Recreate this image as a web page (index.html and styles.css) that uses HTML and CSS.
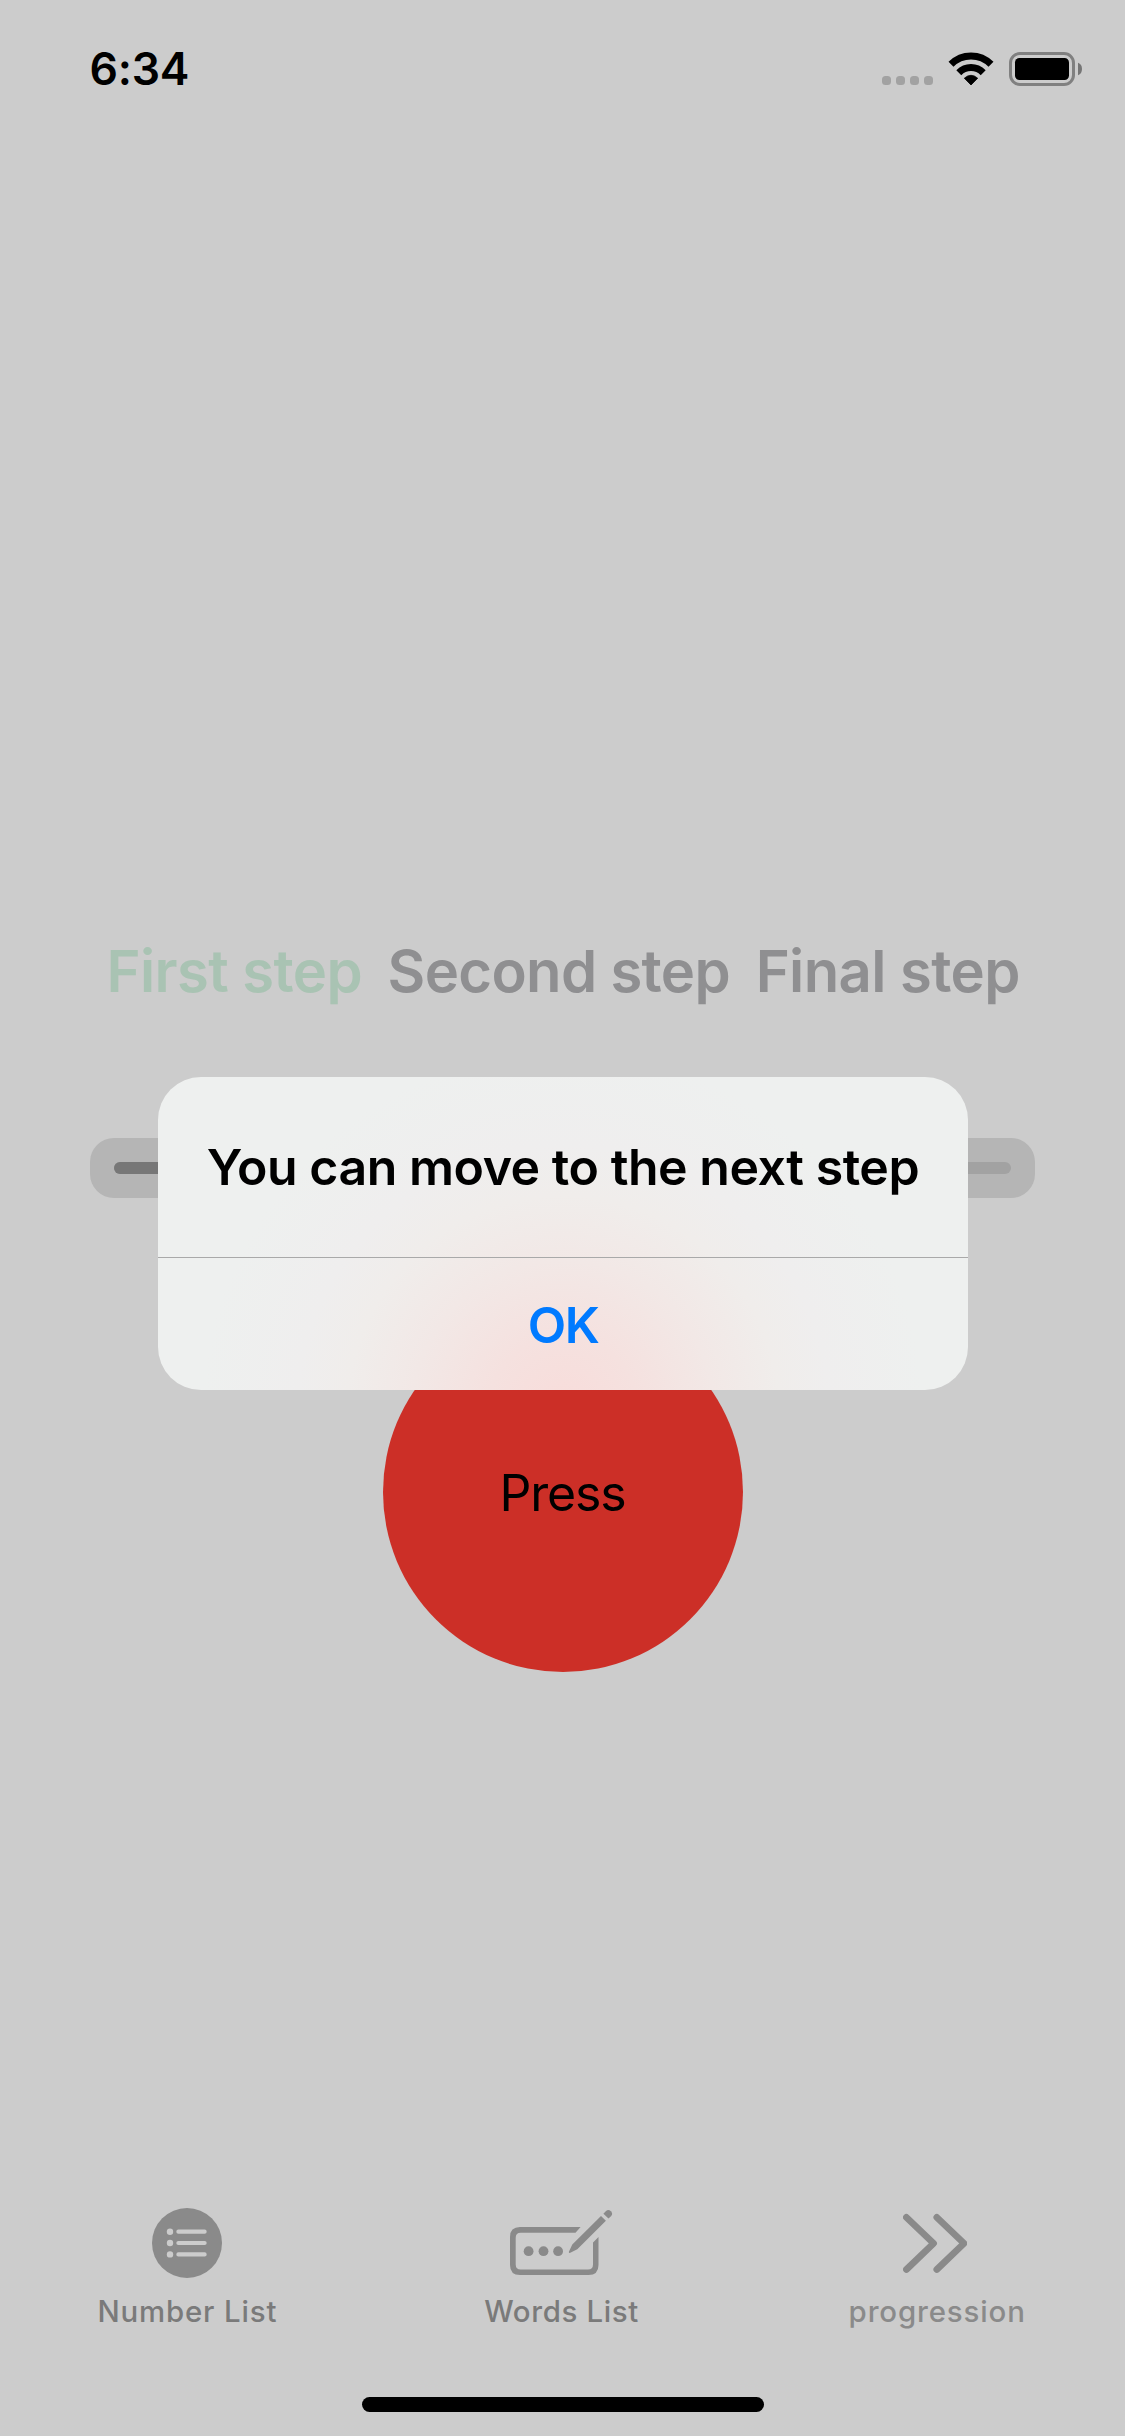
FILE: index.html
```html
<!DOCTYPE html>
<html lang="en">
<head>
<meta charset="utf-8">
<title>Progression</title>
<link rel="stylesheet" href="styles.css">
</head>
<body>
<div class="screen">
  <header class="status-bar">
    <span class="time">6:34</span>
    <div class="indicators">
      <div class="signal"><i></i><i></i><i></i><i></i></div>
      <svg class="wifi" width="46" height="34" viewBox="0 0 46 34">
        <g fill="none" stroke="#000" stroke-width="7">
          <path d="M3 12.2A28.2 28.2 0 0 1 43 12.2"/>
          <path d="M10.8 20.7A17.2 17.2 0 0 1 35.2 20.7"/>
        </g>
        <path d="M16.3 26.2Q23 20.4 29.7 26.2L23 33Z" stroke="#000" stroke-width=".8" stroke-linejoin="round"/>
      </svg>
      <svg class="battery" width="74" height="34" viewBox="0 0 74 34">
        <rect x="1.5" y="1.5" width="63" height="31" rx="9.5" fill="none" stroke="#808080" stroke-width="3"/>
        <rect x="6" y="6" width="54" height="22" rx="4.5"/>
        <path d="M69 10.7Q73 12.2 73 17T69 23.3Z" fill="#757575"/>
      </svg>
    </div>
  </header>

  <main class="content">
    <div class="steps">
      <span class="step step-active">First step</span>
      <span class="step step-second">Second step</span>
      <span class="step">Final step</span>
    </div>
    <div class="progress"><div class="track"><div class="fill"></div></div></div>
    <button class="press">Press</button>
  </main>

  <nav class="tabs">
    <a class="tab">
      <svg class="tab-icon" width="70" height="70" viewBox="0 0 70 70">
        <circle cx="35" cy="35" r="35" fill="#8a8a8a"/>
        <g fill="#ccc"><circle cx="18" cy="23.7" r="3.2"/><circle cx="18" cy="35" r="3.2"/><circle cx="18" cy="46.4" r="3.2"/></g>
        <path d="M26.4 23.7H52.6M26.4 35H52.6M26.4 46.4H52.6" stroke="#ccc" stroke-width="4.2" stroke-linecap="round"/>
      </svg>
      <span class="label label-number">Number List</span>
    </a>
    <a class="tab">
      <svg class="tab-icon" width="104" height="70" viewBox="0 0 104 70">
        <path d="M70.6 19H10Q0 19 0 29V57Q0 67 10 67H78.500Q88.500 67 88.500 57V29L83 34.500V56.500Q83 61.500 78 61.500H10.700Q5.700 61.500 5.700 56.500V29.700Q5.700 24.700 10.700 24.700H65.500Z" fill="#8a8a8a"/>
        <g fill="#8a8a8a">
          <circle cx="18.600" cy="43.200" r="4.900"/><circle cx="33.500" cy="43.200" r="4.900"/><circle cx="48.100" cy="43.200" r="4.900"/>
          <path d="M59.300 44.900Q58.500 44.500 59 43.600L62.300 36.600L91 8L95.900 12.700L67.300 41.300L60.300 44.700Z"/>
          <path d="M93.400 5.700L96 3Q98.300 1 100.900 3.200Q103.200 5.800 101.200 7.900L98.500 10.500Z"/>
        </g>
      </svg>
      <span class="label label-words">Words List</span>
    </a>
    <a class="tab">
      <svg class="tab-icon" width="64" height="70" viewBox="0 0 64 70">
        <path d="M3.400 9.300L30.600 35.300L3.400 61.500M33.800 9.300L61 35.300L33.800 61.500" fill="none" stroke="#8a8a8a" stroke-width="6.700" stroke-linecap="round" stroke-linejoin="round"/>
      </svg>
      <span class="label label-progression">progression</span>
    </a>
  </nav>
  <div class="home-indicator"></div>

  <div class="alert" role="alertdialog">
    <div class="alert-title">You can move to the next step</div>
    <button class="alert-action">OK</button>
  </div>
</div>
</body>
</html>
```
FILE: styles.css
```css
* { box-sizing: border-box; }

body {
  margin: 0;
  background: #ccc;
  color: #000;
  font-family: "Inter", sans-serif;
}

button {
  border: 0;
  padding: 0;
  font: inherit;
  color: inherit;
  background: none;
}

svg { display: block; }

.screen {
  position: relative;
  display: flex;
  flex-direction: column;
  width: 1125px;
  height: 2436px;
  overflow: hidden;
}

.status-bar {
  display: flex;
  justify-content: space-between;
  height: 138px;
  padding: 39px 42px 0 89.500px;
}

.time {
  font-size: 44.500px;
  font-weight: 600;
  line-height: 60px;
  letter-spacing: -0.200px;
}

.indicators {
  display: flex;
  align-items: flex-end;
  height: 47px;
}

.signal {
  display: flex;
  gap: 5px;
  margin: 0 15px 1px 0;
}

.signal i {
  width: 9px;
  height: 9px;
  border-radius: 3.500px;
  background: #a2a2a2;
}

.battery { margin-left: 15px; }

.content {
  flex: 1;
  display: flex;
  flex-direction: column;
  align-items: center;
  padding-top: 793px;
}

.steps {
  display: flex;
  gap: 25.600px;
  width: 912px;
  line-height: 80px;
  font-size: 58px;
  font-weight: 600;
  letter-spacing: -0.600px;
  color: #8f8f91;
  white-space: nowrap;
}

.step-active { color: #a9c3b3; }

.step-second { letter-spacing: -0.660px; }

.progress {
  width: 945px;
  height: 60px;
  margin-top: 127px;
  padding: 24px;
  border-radius: 24px;
  background: #b5b5b5;
}

.track {
  height: 12px;
  border-radius: 6px;
  background: #a2a2a2;
  overflow: hidden;
}

.fill {
  width: 50%;
  height: 100%;
  background: #777;
}

.press {
  width: 360px;
  height: 360px;
  margin-top: 114px;
  padding-top: 2px;
  border-radius: 50%;
  background: #cc2f27;
  font-size: 50px;
  letter-spacing: -1.150px;
}

.tabs {
  display: flex;
  height: 189px;
}

.tab {
  flex: 1;
  display: flex;
  flex-direction: column;
  align-items: center;
}

.tab:first-child { padding-right: 1px; }

.tab:last-child { padding-right: 3px; }

.label {
  margin-top: 14px;
  font-size: 29.400px;
  font-weight: 450;
  line-height: 40px;
  letter-spacing: 0.850px;
  color: #7a7a7a;
}

.label-words { letter-spacing: 0.650px; }

.label-number { padding-left: 1px; }

.label-progression {
  padding-left: 4px;
  letter-spacing: 0.880px;
  color: #8a8a8a;
}

.tab-icon { flex: none; }

.home-indicator {
  width: 402px;
  height: 15px;
  margin: 0 auto 24px 362px;
  border-radius: 7.500px;
  background: #000;
}

/* Alert dialog floating above the dimmed screen */
.alert {
  position: absolute;
  left: 158px;
  top: 1077px;
  width: 810px;
  height: 313px;
  border-radius: 43px;
  background: radial-gradient(circle 360px at 405px 335px, #f8dcda 0, #f5e1df 21%, #f2e8e6 42%, #f0edeb 60%, #efeeee 74%, #eef0ef 100%);
  text-align: center;
  font-size: 50px;
  font-weight: 600;
}

.alert-title {
  height: 181px;
  border-bottom: 1px solid #a9a9a9;
  line-height: 180px;
  letter-spacing: -0.460px;
}

.alert-action {
  width: 100%;
  height: 132px;
  padding-top: 1px;
  line-height: 132px;
  color: #007aff;
  letter-spacing: -1.500px;
}
```
